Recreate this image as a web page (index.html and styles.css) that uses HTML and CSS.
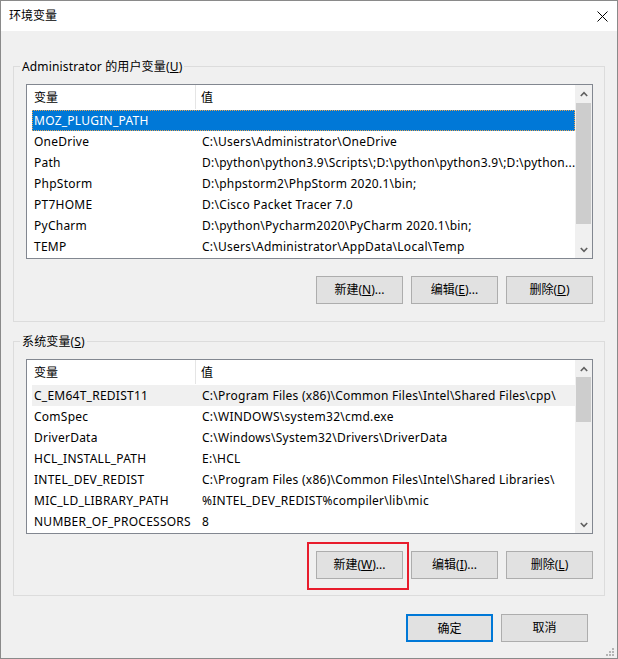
FILE: index.html
```html
<!DOCTYPE html>
<html lang="zh-CN">
<head>
<meta charset="utf-8">
<title>环境变量</title>
<link rel="stylesheet" href="styles.css">
</head>
<body>
<div class="window">
  <div class="titlebar">
    <span class="title">环境变量</span>
    <svg class="close" width="11" height="11" viewBox="0 0 11 11"><path d="M0.5 0.5 L10.5 10.5 M10.5 0.5 L0.5 10.5" stroke="#000" stroke-width="1" fill="none"/></svg>
  </div>

  <fieldset class="group group-user">
    <legend>Administrator 的用户变量(<u>U</u>)</legend>
    <div class="list">
      <div class="list-body">
        <div class="list-head">
          <div class="hcell hcell-name">变量</div>
          <div class="hcell hcell-value">值</div>
        </div>
        <div class="row selected"><span class="c-name">MOZ_PLUGIN_PATH</span><span class="c-value"></span></div>
        <div class="row"><span class="c-name">OneDrive</span><span class="c-value">C:\Users\Administrator\OneDrive</span></div>
        <div class="row"><span class="c-name">Path</span><span class="c-value">D:\python\python3.9\Scripts\;D:\python\python3.9\;D:\python...</span></div>
        <div class="row"><span class="c-name">PhpStorm</span><span class="c-value">D:\phpstorm2\PhpStorm 2020.1\bin;</span></div>
        <div class="row"><span class="c-name">PT7HOME</span><span class="c-value">D:\Cisco Packet Tracer 7.0</span></div>
        <div class="row"><span class="c-name">PyCharm</span><span class="c-value">D:\python\Pycharm2020\PyCharm 2020.1\bin;</span></div>
        <div class="row"><span class="c-name">TEMP</span><span class="c-value">C:\Users\Administrator\AppData\Local\Temp</span></div>
      </div>
      <div class="scrollbar">
        <div class="arrow"><svg width="8" height="6" viewBox="0 0 8 6"><path d="M0.8 5 L4 1.6 L7.2 5" stroke="#606060" stroke-width="1.6" fill="none"/></svg></div>
        <div class="track"><div class="thumb thumb-user"></div></div>
        <div class="arrow"><svg width="8" height="6" viewBox="0 0 8 6"><path d="M0.8 1 L4 4.4 L7.2 1" stroke="#606060" stroke-width="1.6" fill="none"/></svg></div>
      </div>
    </div>
    <div class="btn-row">
      <button class="btn">新建(<u>N</u>)...</button>
      <button class="btn">编辑(<u>E</u>)...</button>
      <button class="btn">删除(<u>D</u>)</button>
    </div>
  </fieldset>

  <fieldset class="group group-sys">
    <legend>系统变量(<u>S</u>)</legend>
    <div class="list">
      <div class="list-body">
        <div class="list-head">
          <div class="hcell hcell-name">变量</div>
          <div class="hcell hcell-value">值</div>
        </div>
        <div class="row inactive"><span class="c-name">C_EM64T_REDIST11</span><span class="c-value">C:\Program Files (x86)\Common Files\Intel\Shared Files\cpp\</span></div>
        <div class="row"><span class="c-name">ComSpec</span><span class="c-value">C:\WINDOWS\system32\cmd.exe</span></div>
        <div class="row"><span class="c-name">DriverData</span><span class="c-value">C:\Windows\System32\Drivers\DriverData</span></div>
        <div class="row"><span class="c-name">HCL_INSTALL_PATH</span><span class="c-value">E:\HCL</span></div>
        <div class="row"><span class="c-name">INTEL_DEV_REDIST</span><span class="c-value">C:\Program Files (x86)\Common Files\Intel\Shared Libraries\</span></div>
        <div class="row"><span class="c-name">MIC_LD_LIBRARY_PATH</span><span class="c-value">%INTEL_DEV_REDIST%compiler\lib\mic</span></div>
        <div class="row"><span class="c-name">NUMBER_OF_PROCESSORS</span><span class="c-value">8</span></div>
      </div>
      <div class="scrollbar">
        <div class="arrow"><svg width="8" height="6" viewBox="0 0 8 6"><path d="M0.8 5 L4 1.6 L7.2 5" stroke="#606060" stroke-width="1.6" fill="none"/></svg></div>
        <div class="track"><div class="thumb thumb-sys"></div></div>
        <div class="arrow"><svg width="8" height="6" viewBox="0 0 8 6"><path d="M0.8 1 L4 4.4 L7.2 1" stroke="#606060" stroke-width="1.6" fill="none"/></svg></div>
      </div>
    </div>
    <div class="btn-row">
      <span class="btn-wrap">
        <button class="btn">新建(<u>W</u>)...</button>
        <span class="mark"></span>
      </span>
      <button class="btn">编辑(<u>I</u>)...</button>
      <button class="btn">删除(<u>L</u>)</button>
    </div>
  </fieldset>

  <div class="dialog-buttons">
    <button class="btn btn-default">确定</button>
    <button class="btn">取消</button>
  </div>

  <svg class="grip" width="9" height="9" viewBox="0 0 9 9">
    <rect x="6" y="0" width="2" height="2" fill="#b4b4b4"/>
    <rect x="3" y="3" width="2" height="2" fill="#b4b4b4"/>
    <rect x="6" y="3" width="2" height="2" fill="#b4b4b4"/>
    <rect x="0" y="6" width="2" height="2" fill="#b4b4b4"/>
    <rect x="3" y="6" width="2" height="2" fill="#b4b4b4"/>
    <rect x="6" y="6" width="2" height="2" fill="#b4b4b4"/>
  </svg>
</div>
</body>
</html>
```

FILE: styles.css
```css
* {
  box-sizing: border-box;
}

html, body {
  margin: 0;
  padding: 0;
  background: #f0f0f0;
}

body {
  font-family: "Noto Sans", "Noto Sans CJK SC", sans-serif;
  font-size: 12px;
  color: #000;
}

.window {
  position: relative;
  width: 618px;
  height: 659px;
  border: 1px solid #8a8a8a;
  background: #f0f0f0;
  display: flex;
  flex-direction: column;
}

.titlebar {
  height: 30px;
  flex: none;
  background: #fff;
  display: flex;
  align-items: center;
  justify-content: space-between;
  padding: 0 9px 0 8px;
}

.title {
  font-size: 12px;
  line-height: 16px;
}

.close {
  display: block;
}

.group {
  flex: none;
  margin: 0 12px;
  border: 1px solid #dcdcdc;
  padding: 9px 11px 17px 12px;
  min-width: 0;
}

.group-user {
  margin-top: 27px;
}

.group-sys {
  margin-top: 11px;
  padding-bottom: 16px;
}

.group legend {
  padding: 0 2px;
  margin-left: -6px;
  line-height: 17px;
  font-size: 12px;
  letter-spacing: 0.15px;
}

.list {
  height: 175px;
  border: 1px solid #828790;
  background: #fff;
  display: flex;
}

.list-body {
  flex: 1;
  min-width: 0;
  overflow: hidden;
}

.list-head {
  height: 25px;
  display: flex;
  align-items: stretch;
}

.hcell {
  line-height: 25px;
  white-space: nowrap;
}

.hcell-name {
  width: 169px;
  padding-left: 7px;
  border-right: 1px solid #e5e5e5;
  height: 24px;
}

.hcell-value {
  padding-left: 5px;
}

.row {
  height: 21px;
  line-height: 21px;
  margin-left: 5px;
  display: flex;
  white-space: nowrap;
  letter-spacing: 0.25px;
}

.row.selected {
  background: #0078d7;
  color: #fff;
  outline: 1px dotted #e6a352;
  outline-offset: -1px;
}

.row.inactive {
  background: #f0f0f0;
}

.c-name {
  width: 170px;
  flex: none;
  padding-left: 2px;
}

.c-value {
  flex: 1;
  min-width: 0;
  overflow: hidden;
}

.scrollbar {
  width: 17px;
  flex: none;
  background: #f0f0f0;
  display: flex;
  flex-direction: column;
}

.arrow {
  height: 17px;
  flex: none;
  display: flex;
  align-items: center;
  justify-content: center;
}

.arrow svg {
  display: block;
}

.track {
  flex: 1;
}

.thumb {
  margin: 0 1px;
  background: #cdcdcd;
}

.thumb-user {
  margin-top: 1px;
  height: 121px;
}

.thumb-sys {
  margin-top: 0;
  height: 45px;
}

.btn-row {
  margin-top: 17px;
  display: flex;
  justify-content: flex-end;
  gap: 8px;
}

.btn-wrap {
  position: relative;
  display: flex;
}

.btn {
  width: 87px;
  height: 28px;
  margin: 0;
  padding: 0;
  border: 1px solid #adadad;
  background: #e1e1e1;
  font-family: "Noto Sans", "Noto Sans CJK SC", sans-serif;
  font-size: 12px;
  line-height: 26px;
  color: #000;
  text-align: center;
}

.btn-default {
  border: 2px solid #0078d7;
}

.mark {
  position: absolute;
  left: -9px;
  top: -9px;
  width: 102px;
  height: 48px;
  border: 2px solid #e81c2c;
  pointer-events: none;
}

.dialog-buttons {
  margin-top: 18px;
  padding-right: 29px;
  display: flex;
  justify-content: flex-end;
  gap: 8px;
}

.grip {
  position: absolute;
  right: 2px;
  bottom: 1px;
}
```
